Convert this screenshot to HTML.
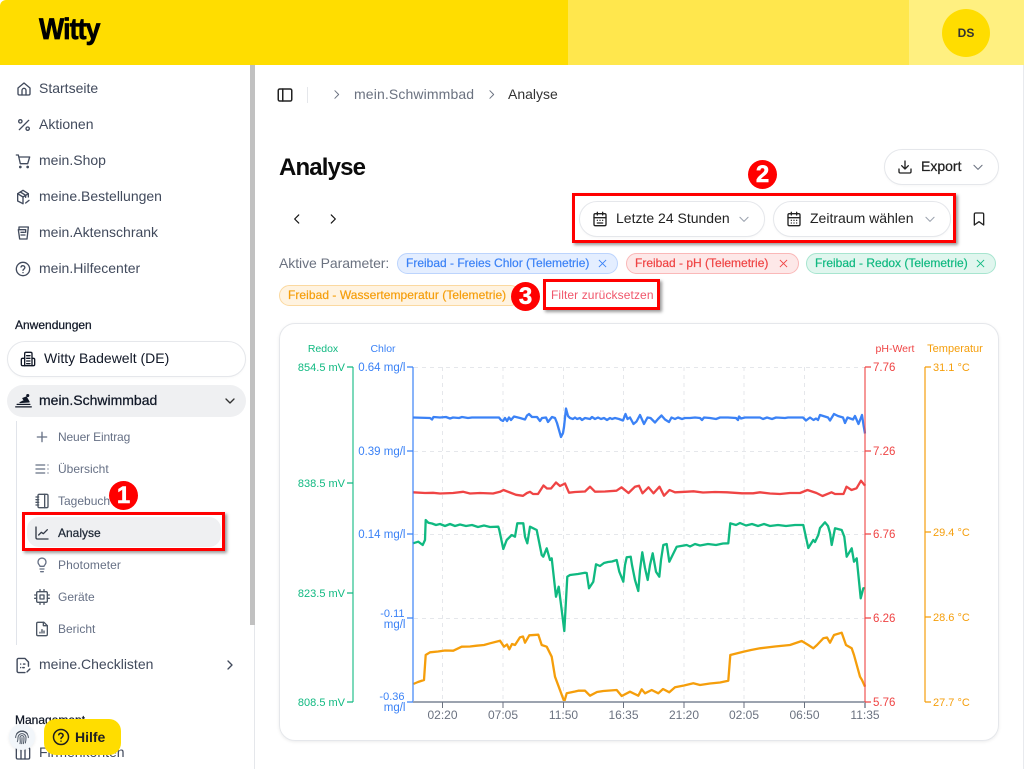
<!DOCTYPE html>
<html lang="de"><head><meta charset="utf-8"><title>Analyse</title>
<style>
html,body{margin:0;padding:0;background:#fff}
body{width:1024px;height:769px;overflow:hidden;position:relative;font-family:"Liberation Sans",sans-serif;color:#374151}
.a{position:absolute;white-space:nowrap}
.t{position:absolute;white-space:nowrap;line-height:16px;transform:translateY(-8px)}
.nav{font-size:14px;color:#414a5c;left:39px}
.sub{font-size:12px;color:#667085;left:58px}
.m{-webkit-text-stroke:.25px currentColor}
.chip{position:absolute;height:19px;border-radius:11px;border:1px solid;font-size:12px;line-height:19px;padding-left:8px;white-space:nowrap;-webkit-text-stroke:.2px currentColor;box-sizing:content-box}
.chip svg{position:absolute;top:5px;width:9px;height:9px}
.pill{position:absolute;background:#fff;border:1px solid #e5e7eb;border-radius:18px;box-sizing:border-box;box-shadow:0 1px 2px rgba(0,0,0,.03)}
.red{position:absolute;border:3px solid #f00;box-sizing:border-box;box-shadow:2px 2px 3px rgba(0,0,0,.4)}
.badge{position:absolute;width:29px;height:29px;border-radius:50%;background:#f00;color:#fff;font-weight:bold;font-size:24px;line-height:29px;text-align:center;-webkit-text-stroke:.5px #fff}
svg.i{position:absolute;fill:none;stroke:#414a5c;stroke-width:2;stroke-linecap:round;stroke-linejoin:round}
</style></head><body>

<!-- header -->
<div class="a" style="left:0;top:0;width:1024px;height:65px;overflow:hidden">
<div class="a" style="left:0;top:0;width:568px;height:65px;background:#ffdd00;border-top-left-radius:6px"></div>
<div class="a" style="left:568px;top:0;width:341px;height:65px;background:#ffe74d"></div>
<div class="a" style="left:909px;top:0;width:115px;height:65px;background:#fff080"></div>
</div>
<div class="a" style="left:39px;top:11px;font-size:30px;line-height:38px;font-weight:bold;letter-spacing:-1px;color:#000;-webkit-text-stroke:.7px #000;transform:scaleX(.89);transform-origin:0 0">Witty</div>
<div class="a" style="left:942px;top:9px;width:48px;height:48px;border-radius:50%;background:#ffdd00;color:#333;font-size:12px;font-weight:bold;line-height:48px;text-align:center">DS</div>

<!-- sidebar chrome -->
<div class="a" style="left:254px;top:65px;width:1px;height:704px;background:#e5e7eb"></div>
<div class="a" style="left:250px;top:65px;width:5px;height:560px;background:#c1c1c1"></div>
<div class="a" style="left:1023px;top:65px;width:1px;height:704px;background:#e8eaee"></div>

<!-- main nav -->
<svg class="i" style="left:16px;top:81px" width="16" height="16" viewBox="0 0 24 24"><path d="M3 10.5 12 3l9 7.5V19a2 2 0 0 1-2 2H5a2 2 0 0 1-2-2z"/><path d="M9 21v-7a3 3 0 0 1 6 0v7"/></svg>
<div class="t nav" style="top:88px">Startseite</div>
<svg class="i" style="left:16px;top:117px" width="16" height="16" viewBox="0 0 24 24"><path d="M19 5 5 19"/><circle cx="6.5" cy="6.5" r="2.5"/><circle cx="17.5" cy="17.5" r="2.5"/></svg>
<div class="t nav" style="top:124px">Aktionen</div>
<svg class="i" style="left:15px;top:153px" width="16" height="16" viewBox="0 0 24 24"><circle cx="8" cy="21" r="1"/><circle cx="19" cy="21" r="1"/><path d="M2 3h3l3 13h11l3-10H6"/></svg>
<div class="t nav" style="top:160px">mein.Shop</div>
<svg class="i" style="left:15px;top:189px" width="16" height="16" viewBox="0 0 24 24"><path d="M12 22 4 18V7l8-5 8 5v5"/><path d="M4 7l8 5 8-5M12 12v10M8 4.5l8 5v3"/><path d="M16 21l5-4"/></svg>
<div class="t nav" style="top:196px">meine.Bestellungen</div>
<svg class="i" style="left:15px;top:225px" width="16" height="16" viewBox="0 0 24 24"><path d="M6 7V3h14l-2 18H7L5 7h11v4"/><path d="M9 11h5M9 15h6"/></svg>
<div class="t nav" style="top:232px">mein.Aktenschrank</div>
<svg class="i" style="left:15px;top:261px" width="16" height="16" viewBox="0 0 24 24"><circle cx="12" cy="12" r="10"/><path d="M9 9a3 3 0 0 1 5.8 1c0 2-2.8 2.5-2.8 4"/><path d="M12 17.5h.01"/></svg>
<div class="t nav" style="top:268px">mein.Hilfecenter</div>

<div class="t m" style="left:15px;top:325px;font-size:12px;color:#111827">Anwendungen</div>
<div class="pill" style="left:7px;top:341px;width:239px;height:36px"></div>
<svg class="i" style="left:20px;top:351px;stroke:#111827" width="16" height="16" viewBox="0 0 24 24"><path d="M7 22V4a2 2 0 0 1 2-2h7a2 2 0 0 1 2 2v18z"/><path d="M7 11H4a2 2 0 0 0-2 2v7a2 2 0 0 0 2 2h3M18 11h2a2 2 0 0 1 2 2v7a2 2 0 0 1-2 2h-2M10 7h5M10 11h5M10 15h5M10 19h5"/></svg>
<div class="t" style="left:44px;top:358px;font-size:14px;color:#111827">Witty Badewelt (DE)</div>

<div class="a" style="left:7px;top:385px;width:239px;height:32px;border-radius:16px;background:#eff0f2"></div>
<svg class="i" style="left:15px;top:392px;stroke:#111827" width="17" height="17" viewBox="0 0 24 24"><path d="M1 21h22M3 17.500h18" stroke-width="1.800"/><path d="M7 15l6-3-2-3 5-2 4 7z" fill="#111827" stroke-width="1.500"/><circle cx="18" cy="5" r="2.200" fill="#111827" stroke="none"/></svg>
<div class="t m" style="left:39px;top:400px;font-size:14px;color:#111827">mein.Schwimmbad</div>
<svg class="i" style="left:222px;top:393px;stroke:#333" width="16" height="16" viewBox="0 0 24 24"><path d="m6 9 6 6 6-6"/></svg>

<div class="a" style="left:16px;top:421px;width:1px;height:224px;background:#e1e4ea"></div>

<svg class="i" style="left:34px;top:429px;stroke:#667085" width="16" height="16" viewBox="0 0 24 24"><path d="M5 12h14M12 5v14"/></svg>
<div class="t sub" style="top:437px;letter-spacing:-.15px">Neuer Eintrag</div>
<svg class="i" style="left:34px;top:461px;stroke:#667085" width="16" height="16" viewBox="0 0 24 24"><path d="M3 6h13M3 12h13M3 18h13M21 6h.01M21 12h.01M21 18h.01"/></svg>
<div class="t sub" style="top:469px">Übersicht</div>
<svg class="i" style="left:34px;top:493px;stroke:#4b5563" width="16" height="16" viewBox="0 0 24 24"><rect x="6" y="2" width="15" height="20" rx="2"/><path d="M3 6h4M3 10h4M3 14h4M3 18h4M16 2v20"/></svg>
<div class="t sub" style="top:501px">Tagebuch</div>

<div class="a" style="left:27px;top:517px;width:194px;height:30px;border-radius:12px;background:#eff0f2"></div>
<svg class="i" style="left:34px;top:525px;stroke:#333a46" width="16" height="16" viewBox="0 0 24 24"><path d="M3 3v16a2 2 0 0 0 2 2h16"/><path d="m7 15 4-4 3 2 6-6"/></svg>
<div class="t m" style="left:58px;top:533px;font-size:12px;color:#1f2937">Analyse</div>

<svg class="i" style="left:34px;top:557px;stroke:#667085" width="16" height="16" viewBox="0 0 24 24"><path d="M15 14c.2-1 .7-1.700 1.500-2.500A6 6 0 1 0 7.500 11.500c.8.800 1.300 1.500 1.500 2.500z"/><path d="M9 18h6M10 22h4"/></svg>
<div class="t sub" style="top:565px;letter-spacing:.1px">Photometer</div>
<svg class="i" style="left:34px;top:589px;stroke:#4b5563" width="16" height="16" viewBox="0 0 24 24"><rect x="4" y="4" width="16" height="16" rx="2"/><rect x="9" y="9" width="6" height="6"/><path d="M9 1v3M15 1v3M9 20v3M15 20v3M20 9h3M20 14h3M1 9h3M1 14h3"/></svg>
<div class="t sub" style="top:597px">Geräte</div>
<svg class="i" style="left:34px;top:621px;stroke:#4b5563" width="16" height="16" viewBox="0 0 24 24"><path d="M15 2H6a2 2 0 0 0-2 2v16a2 2 0 0 0 2 2h12a2 2 0 0 0 2-2V7z"/><path d="M14 2v5h6M9 18v-1M12 18v-5M15 18v-3"/></svg>
<div class="t sub" style="top:629px">Bericht</div>

<svg class="i" style="left:15px;top:657px" width="17" height="17" viewBox="0 0 24 24"><path d="M14 22H5a2 2 0 0 1-2-2V4a2 2 0 0 1 2-2h9l5 5v6"/><path d="M8 10h.01M12 10h2M8 15h.01M11 15h2M17 21l4-4"/></svg>
<div class="t nav" style="top:664px">meine.Checklisten</div>
<svg class="i" style="left:222px;top:657px" width="16" height="16" viewBox="0 0 24 24"><path d="m9 6 6 6-6 6"/></svg>

<div class="t m" style="left:15px;top:720px;font-size:12px;color:#111827">Management</div>
<svg class="i" style="left:15px;top:745px" width="16" height="16" viewBox="0 0 24 24"><rect x="2" y="4" width="20" height="17" rx="2"/><path d="M9 4v17M15 4v17"/></svg>
<div class="t nav" style="top:752px">Firmenkonten</div>

<div class="a" style="left:9px;top:724px;width:26px;height:26px;border-radius:50%;background:#f2f6fa;box-shadow:0 1px 3px rgba(0,0,0,.08)"></div>
<svg class="i" style="left:14px;top:729px;stroke:#4b5563;stroke-width:1.5" width="16" height="16" viewBox="0 0 24 24"><path d="M4 7a10 10 0 0 1 16 0M2.500 13a9.500 9.500 0 0 1 19 0M5 19c1-2 1-4 1-6a6 6 0 0 1 12 0c0 3 0 5-1 8M9 22c1-3 0-6 0-9a3 3 0 0 1 6 0c0 3 0 6-1 9M12 13c0 3 0 6-.5 9"/></svg>
<div class="a" style="left:44px;top:719px;width:77px;height:36px;border-radius:12px;background:#ffdd00"></div>
<svg class="i" style="left:52px;top:728px;stroke:#1f1f1f" width="18" height="18" viewBox="0 0 24 24"><circle cx="12" cy="12" r="10"/><path d="M9 9a3 3 0 0 1 5.800 1c0 2-2.800 2.500-2.800 4M12 17.500h.01"/></svg>
<div class="t" style="left:75px;top:737px;font-size:14px;font-weight:bold;color:#222">Hilfe</div>

<!-- breadcrumb -->
<svg class="i" style="left:276px;top:86px;stroke:#222" width="18" height="18" viewBox="0 0 24 24"><rect x="3" y="4" width="18" height="16" rx="2"/><path d="M9 4v16"/></svg>
<div class="a" style="left:307px;top:87px;width:1px;height:16px;background:#e5e7eb"></div>
<svg class="i" style="left:330px;top:88px;stroke:#6b7280;stroke-width:1.800" width="13" height="13" viewBox="0 0 24 24"><path d="m9 5 7 7-7 7"/></svg>
<div class="t" style="left:354px;top:94px;font-size:14px;color:#6b7280;letter-spacing:.13px">mein.Schwimmbad</div>
<svg class="i" style="left:485px;top:88px;stroke:#6b7280;stroke-width:1.800" width="13" height="13" viewBox="0 0 24 24"><path d="m9 5 7 7-7 7"/></svg>
<div class="t" style="left:508px;top:94px;font-size:14px;color:#333">Analyse</div>

<div class="a" style="left:279px;top:154px;font-size:24px;line-height:28px;font-weight:bold;color:#0b0b0b;letter-spacing:-.85px">Analyse</div>

<div class="pill" style="left:884px;top:149px;width:115px;height:36px"></div>
<svg class="i" style="left:897px;top:159px;stroke:#222" width="16" height="16" viewBox="0 0 24 24"><path d="M21 15v4a2 2 0 0 1-2 2H5a2 2 0 0 1-2-2v-4M7 10l5 5 5-5M12 15V3"/></svg>
<div class="t m" style="left:921px;top:166px;font-size:14px;color:#222">Export</div>
<svg class="i" style="left:971px;top:160px;stroke:#6b7280;stroke-width:1.800" width="14" height="14" viewBox="0 0 24 24"><path d="m5 9 7 7 7-7"/></svg>

<svg class="i" style="left:290px;top:212px;stroke:#111" width="14" height="14" viewBox="0 0 24 24"><path d="m15 5-7 7 7 7"/></svg>
<svg class="i" style="left:326px;top:212px;stroke:#111" width="14" height="14" viewBox="0 0 24 24"><path d="m9 5 7 7-7 7"/></svg>

<div class="pill" style="left:579px;top:201px;width:186px;height:36px"></div>
<svg class="i" style="left:592px;top:211px;stroke:#222" width="16" height="16" viewBox="0 0 24 24"><rect x="3" y="4" width="18" height="18" rx="2"/><path d="M16 2v4M8 2v4M3 10h18M8 14h.01M12 14h.01M16 14h.01M8 18h8"/></svg>
<div class="t" style="left:616px;top:218px;font-size:14px;color:#222">Letzte 24 Stunden</div>
<svg class="i" style="left:737px;top:212px;stroke:#9ca3af;stroke-width:1.800" width="14" height="14" viewBox="0 0 24 24"><path d="m5 9 7 7 7-7"/></svg>

<div class="pill" style="left:773px;top:201px;width:178px;height:36px"></div>
<svg class="i" style="left:786px;top:211px;stroke:#222" width="16" height="16" viewBox="0 0 24 24"><rect x="3" y="4" width="18" height="18" rx="2"/><path d="M16 2v4M8 2v4M3 10h18M8 14h.01M12 14h.01M16 14h.01M8 18h.01M12 18h.01M16 18h.01"/></svg>
<div class="t" style="left:810px;top:218px;font-size:14px;color:#222">Zeitraum wählen</div>
<svg class="i" style="left:923px;top:212px;stroke:#9ca3af;stroke-width:1.800" width="14" height="14" viewBox="0 0 24 24"><path d="m5 9 7 7 7-7"/></svg>
<svg class="i" style="left:971px;top:211px;stroke:#222" width="16" height="16" viewBox="0 0 24 24"><path d="M19 21l-7-5-7 5V5a2 2 0 0 1 2-2h10a2 2 0 0 1 2 2z"/></svg>

<div class="t" style="left:279px;top:263px;font-size:14px;color:#6b7280;letter-spacing:-.06px">Aktive Parameter:</div>
<div class="chip" style="left:397px;top:253px;width:211px;background:#e4eeff;border-color:#bcd4fd;color:#3b82f6">Freibad - Freies Chlor (Telemetrie)<svg style="left:200px" viewBox="0 0 10 10" stroke="#3b82f6" fill="none"><path d="M1 1l8 8M9 1l-8 8"/></svg></div>
<div class="chip" style="left:626px;top:253px;width:163px;background:#fde8e8;border-color:#fab8b8;color:#ef4444">Freibad - pH (Telemetrie)<svg style="left:152px" viewBox="0 0 10 10" stroke="#ef4444" fill="none"><path d="M1 1l8 8M9 1l-8 8"/></svg></div>
<div class="chip" style="left:806px;top:253px;width:180px;background:#e0f6ee;border-color:#a7e5cf;color:#10b981">Freibad - Redox (Telemetrie)<svg style="left:169px" viewBox="0 0 10 10" stroke="#10b981" fill="none"><path d="M1 1l8 8M9 1l-8 8"/></svg></div>
<div class="chip" style="left:279px;top:285px;width:232px;background:#fff3e0;border-color:#fbd9a0;color:#f59e0b;letter-spacing:.05px">Freibad - Wassertemperatur (Telemetrie)</div>
<div class="t" style="left:551px;top:295px;font-size:12px;color:#f0566b;letter-spacing:.1px">Filter zurücksetzen</div>

<!-- chart card -->
<div class="a" style="left:279px;top:323px;width:720px;height:418px;border:1px solid #e5e7eb;border-radius:16px;box-sizing:border-box;box-shadow:0 1px 3px rgba(0,0,0,.08)"></div>

<svg class="a" style="left:0;top:0" width="1024" height="769" viewBox="0 0 1024 769" font-family="'Liberation Sans',sans-serif" font-size="11.500">
<g stroke="#e5e7eb" stroke-width="1" stroke-dasharray="4 4" fill="none">
<path d="M414 367.500H865M414 451.500H865M414 534.500H865M414 618.500H865"/>
<path d="M442.500 367V702M503 367V702M563.500 367V702M623.500 367V702M684 367V702M744 367V702M804.500 367V702"/>
</g>
<g fill="none" stroke-width="2.300" stroke-linejoin="round" stroke-linecap="butt">
<path stroke="#3b82f6" d="M413 417.500 430 418 432 419.500 433.500 417 440 417.500 446 417 450 418.500 453 417.500 459 418 462 417 468 418 472 417.500 480 417.500 499 417.500 501 420 503 421 505 418 507 421 509 417.500 511 420 514 416.500 520 418 525 419.500 527 415.500 529 414 532 417 537 417 540 421 542 418 546 417.500 548 422 552 417 555 418 557 423 559 430 561 437 563 433 564 427 566 408.500 568 416 570 418 573 419 575 417.500 577 419 580 418 582 420 585 418 590 419 592 417 595 419 598 417.500 601 419 604 418 607 420 610 418 612 419 615 418 619 419 623 420.500 625.500 414 627.500 419 630 417.500 633.500 424 636.500 421.500 640 415 644 424 647.500 417.500 650.500 418 655 422.500 658 419 661.500 415.500 665 419.500 669 422 671.500 417.500 675 419 678 417.500 682 419 685 418 690 418 695 417.500 700 418 702 420 704 417.500 710 418 716 419 720 417.500 724 417.500 728 417.500 736 418 738 420 739 416.500 741 418.500 745 417.500 760 417.500 763 419 767 417.500 772 419 776 417.500 785 418 788 417.500 803 417.500 806 420.500 810 417.500 813.500 420 816 418.500 818 420 820 415 828 417.500 830 420.500 834 414 838 416 843 417.500 845 423 847.500 417.500 853 419.500 855 416 858.500 424 862 415 863.500 425 865 433.500"/>
<path stroke="#ef4444" d="M413 492.300 425 493 433 492.800 440 493.500 453 493 463 491.800 470 493.500 480 493 493 493.500 500 491.800 503.500 490 510 492.500 516 494.800 523 495.800 527 493 530 491.800 533 494 538 494 543.500 485.500 547 488.500 551 488.500 556 482.500 560 486 565 483.500 569 492.700 575 492 585 491.500 590 486.700 595 491.700 605 491.500 616.500 490.700 621.500 487.300 628.500 493 635 486.700 639 485.700 642.500 493.300 648.500 487.300 653.500 493.300 659.500 486.700 664 495.700 669.500 490 675 492.300 685 491.800 693.500 491.300 703 492.500 715 492 727 492.300 742 493.300 753 493.300 760 492.300 770 493.500 780 494 790 493 800 493 807.500 490 816.500 493 822.500 496 831.500 492.300 835 494 843.500 494 846.500 486.700 851.500 490 856.500 488.300 861 480.700 865 485.700"/>
<path stroke="#10b981" d="M413 543.300 418.300 541.700 422.700 545 425 540 425.700 520 428.300 522.700 432 523.500 436 525 440 524 445 526 450 524 455 526 460 524.500 466 526 472 525 478 527 484 525.500 490 527 498.300 526.700 499.300 530 503.300 549 506.700 540 511.700 535 515 536.700 517.300 523.300 523.300 523.300 525 536.700 527.300 543.300 530 526.700 536.700 530 541.700 555 543.300 556.700 546.700 548.300 550 560 551.700 558.300 556 596.700 558.700 586.700 561.700 610 564.300 631 567.300 576.700 570 575 578 574 585 572.700 586.700 573 589 588.300 593.300 581.700 596 564.300 600 566 604 563 608 562 612 561.500 616.700 560 619.300 571.700 623.300 581.700 625 565 626.700 557.300 630.700 556.700 632 565 635 580 638.300 591 640 570 642.300 552.300 645 568 647.700 580 650 565 652.700 553.300 656 571.700 659.300 576.700 661 560 663.300 545 666.700 544 669.300 561.700 676.700 546.700 686.700 545 690 546.500 695 544 700 545.500 708 544 716 545 723 543.500 728.300 543.300 730.300 523.300 736 525 740 523 746 525.500 752 524 758 526 764 524 770 526 778 525 786 526 795 525 803.300 525 808.300 548 813.300 540 815 542 818.300 535 820 528 825 522.300 828 526 830 533 831.700 545 835 528.300 841.700 530 844.300 536.700 846.700 556.700 851.700 548.300 854 561.700 856.700 558.300 860.700 598.300 863.300 588.300 865 588.300"/>
<path stroke="#f59e0b" d="M413.300 684 418 682 424 680 425.700 655 430 652.300 438 651.500 445 650.500 453.300 650.700 461.700 646.700 470 646.500 476.700 645.700 484 645 490 643.300 500 640.700 504 646.700 507 644.500 509.300 649.300 512 644 515 645 520 637.300 523 636.500 525 642.700 529.300 635.300 538.300 634.700 541.700 645 546.700 646.700 551.700 656.700 555 676.700 564.300 701.700 566.700 693.300 575 691.500 578.300 690.700 585 690.700 590 695.700 597 692 603.300 691 610 690.500 616.700 690 621.700 696 630 691.700 638.300 695.700 641.700 689.300 645 693.300 651.700 690 658.300 693.300 663 689 669.300 692.300 675 687.300 684 685.500 693.300 683.300 700 685 710 683.500 720 682.500 728.300 680.700 730.300 655 743.300 651.700 751 650 760 648.300 775 646.500 790 645 801.700 641 808.300 645 813.300 648.300 817 645 823.300 638.300 827 637.500 830 642.700 834 635 841.700 632.700 846 645 851.700 648.300 854 655 860 676.700 862 680 865 686.700"/>
</g>
<!-- axes -->
<g fill="none" stroke-width="2">
<path stroke="#10b981" stroke-opacity=".55" d="M353 367V702"/>
<path stroke="#10b981" d="M347 367H353M347 483H353M347 593H353M347 702H353" stroke-width="1.300"/>
<path stroke="#3b82f6" stroke-opacity=".6" d="M413 367V702"/>
<path stroke="#3b82f6" d="M407 367H413M407 451H413M407 534H413M407 618H413M407 702H413" stroke-width="1.300"/>
<path stroke="#9ca3af" d="M413 702H865"/>
<path stroke="#6b7280" d="M442.500 702V708M503 702V708M563.500 702V708M623.500 702V708M684 702V708M744 702V708M804.500 702V708" stroke-width="1"/>
<path stroke="#9ca3af" d="M865 702V708"/>
<path stroke="#ef4444" stroke-opacity=".55" d="M865 367V702"/>
<path stroke="#ef4444" d="M865 367H871M865 451H871M865 534H871M865 618H871M865 702H871" stroke-width="1.300"/>
<path stroke="#f59e0b" stroke-opacity=".6" d="M925 367V702"/>
<path stroke="#f59e0b" d="M925 367H931M925 532H931M925 617H931M925 702H931" stroke-width="1.300"/>
</g>
<g fill="#10b981" text-anchor="end" dominant-baseline="central" font-size="11" transform="translate(0 1)">
<text x="345" y="367">854.5 mV</text><text x="345" y="483">838.5 mV</text><text x="345" y="593">823.5 mV</text><text x="345" y="702">808.5 mV</text>
</g>
<g fill="#3b82f6" text-anchor="end" dominant-baseline="central" transform="translate(0 1)">
<text x="405.500" y="367">0.64 mg/l</text><text x="405.500" y="451">0.39 mg/l</text><text x="405.500" y="534">0.14 mg/l</text>
<text x="404.500" y="613" font-size="11">-0.11</text><text x="405.500" y="624">mg/l</text>
<text x="404.500" y="696" font-size="11">-0.36</text><text x="405.500" y="707">mg/l</text>
</g>
<g fill="#ef4444" dominant-baseline="central" transform="translate(0 1)">
<text x="873" y="367">7.76</text><text x="873" y="451">7.26</text><text x="873" y="534">6.76</text><text x="873" y="618">6.26</text><text x="873" y="702">5.76</text>
</g>
<g fill="#f59e0b" dominant-baseline="central" font-size="11" transform="translate(0 1)">
<text x="933" y="367">31.1 °C</text><text x="933" y="532">29.4 °C</text><text x="933" y="617">28.6 °C</text><text x="933" y="702">27.7 °C</text>
</g>
<g fill="#6b7280" text-anchor="middle" dominant-baseline="central" font-size="12">
<text x="442.500" y="715">02:20</text><text x="503" y="715">07:05</text><text x="563.500" y="715">11:50</text><text x="623.500" y="715">16:35</text><text x="684" y="715">21:20</text><text x="744" y="715">02:05</text><text x="804.500" y="715">06:50</text><text x="865" y="715">11:35</text>
</g>
<g text-anchor="middle" dominant-baseline="central" font-size="10.500" transform="translate(0 1)">
<text x="323" y="348" fill="#10b981">Redox</text><text x="383" y="348" fill="#3b82f6">Chlor</text><text x="895" y="348" fill="#ef4444">pH-Wert</text><text x="955" y="348" fill="#f59e0b" font-size="11">Temperatur</text>
</g>
</svg>

<!-- annotations -->
<div class="red" style="left:22px;top:512px;width:203px;height:39px"></div>
<div class="red" style="left:572px;top:193px;width:384px;height:50px"></div>
<div class="red" style="left:543px;top:279px;width:117px;height:31px"></div>
<div class="badge" style="left:109px;top:481px">1</div>
<div class="badge" style="left:748px;top:160px">2</div>
<div class="badge" style="left:511px;top:282px">3</div>
</body></html>
